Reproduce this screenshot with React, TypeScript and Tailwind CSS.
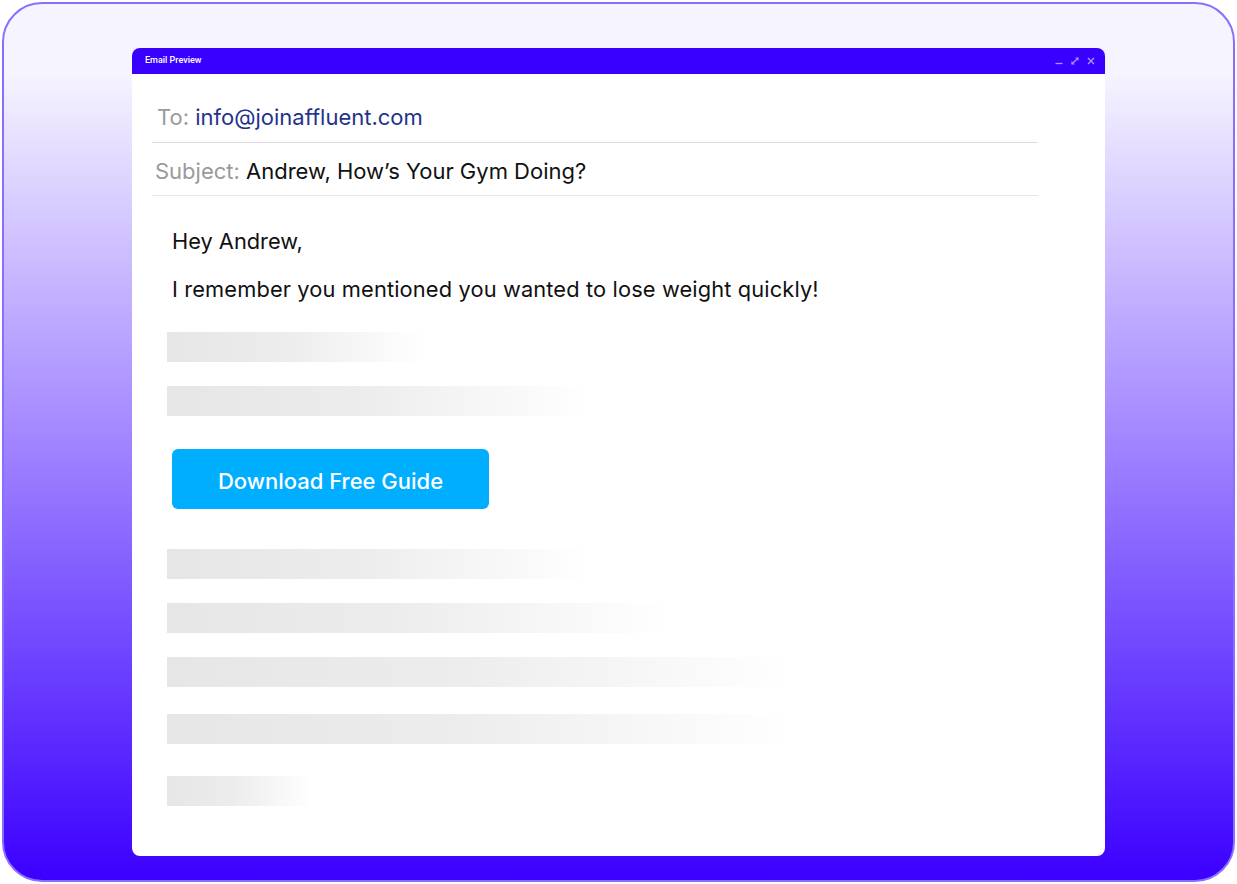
import React from 'react';

const font = { fontFamily: 'Inter, "Noto Sans", sans-serif' };

// skeleton line that fades out to the right
function Bar({ w, className = '' }: { w: number; className?: string }) {
  return (
    <div
      className={`h-[30px] bg-[linear-gradient(90deg,#e6e6e6_0%,#ececec_45%,#ffffff_100%)] ${className}`}
      style={{ width: w }}
    />
  );
}

function TitleBar() {
  return (
    <div className="flex h-[26px] items-center justify-between rounded-t-[8px] bg-[#3a00ff] pl-[13px] pr-[10px]">
      <span className="text-[9px] font-medium text-white" style={{ fontFamily: 'Roboto, sans-serif' }}>
        Email Preview
      </span>
      <div className="flex items-center gap-[8px] text-[#a995ff]">
        <svg width="8" height="8" viewBox="0 0 8 8">
          <path d="M0.5 6.5h7" stroke="currentColor" strokeWidth="1.3" />
        </svg>
        <svg width="8" height="8" viewBox="0 0 8 8" fill="none" stroke="currentColor" strokeWidth="1.2">
          <path d="M1 7L7 1" />
          <path d="M4.5 1H7v2.5" />
          <path d="M1 4.5V7h2.5" />
        </svg>
        <svg width="8" height="8" viewBox="0 0 8 8" fill="none" stroke="currentColor" strokeWidth="1.4">
          <path d="M1 1l6 6M7 1L1 7" />
        </svg>
      </div>
    </div>
  );
}

export default function App() {
  return (
    <div className="h-[884px] w-full bg-white p-[2px]" style={font}>
      <div className="h-[880px] rounded-[40px] border-2 border-[#8b6dff] bg-[linear-gradient(180deg,#f6f4ff_8%,#3b00ff_100%)] px-[128px] pt-[44px]">
        <div className="h-[808px] rounded-[8px] bg-white">
          <TitleBar />

          <div className="px-[20px]">
            <div className="w-[886px]">
              <div className="border-b border-[#dcdbe6] pl-[5px] pb-[11px] pt-[29px] text-[22px] leading-[28px]">
                <span className="text-[#9a9a9a]">To:</span>{' '}
                <span className="text-[#24338a]">info@joinaffluent.com</span>
              </div>
              <div className="border-b border-[#e6e6e9] pl-[3px] pb-[10px] pt-[14px] text-[22px] leading-[28px]">
                <span className="text-[#9a9a9a]">Subject:</span>{' '}
                <span className="text-[#111]">Andrew, How’s Your Gym Doing?</span>
              </div>
            </div>

            <div className="pl-[15px]">
              <p className="pl-[5px] pt-[31px] text-[21.8px] leading-[28px] text-[#111]">Hey Andrew,</p>
              <p className="mt-[20px] pl-[5px] text-[21.8px] leading-[28px] tracking-[0.14px] text-[#111]">
                I remember you mentioned you wanted to lose weight quickly!
              </p>

              <Bar w={258} className="mt-[29px]" />
              <Bar w={423} className="mt-[24px]" />

              <button className="ml-[5px] mt-[33px] flex h-[60px] w-[317px] items-center justify-center rounded-[6px] bg-[#00aeff] pt-[4px] text-[22px] font-medium text-white">
                Download Free Guide
              </button>

              <Bar w={423} className="mt-[40px]" />
              <Bar w={503} className="mt-[24px]" />
              <Bar w={625} className="mt-[24px]" />
              <Bar w={625} className="mt-[27px]" />
              <Bar w={145} className="mt-[32px]" />
            </div>
          </div>
        </div>
      </div>
    </div>
  );
}
